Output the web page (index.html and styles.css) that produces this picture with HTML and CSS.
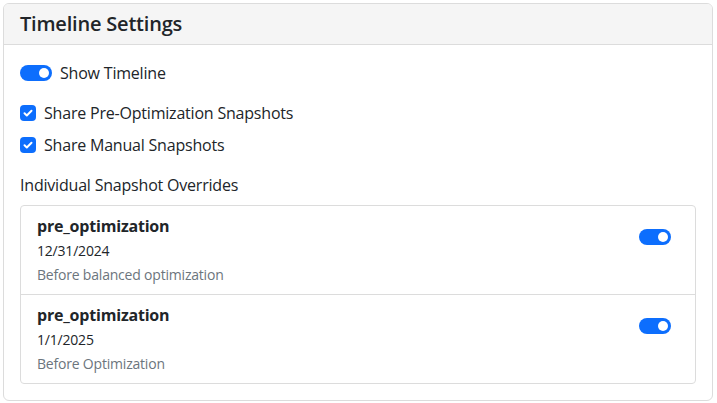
FILE: index.html
```html
<!DOCTYPE html>
<html lang="en">
<head>
  <meta charset="UTF-8">
  <title>Timeline Settings</title>
  <link rel="stylesheet" href="styles.css">
</head>
<body>
  <section class="card">
    <div class="card-header">
      <h5 class="card-title">Timeline Settings</h5>
    </div>

    <div class="card-body">
      <label class="switch-row">
        <span class="switch on"></span>
        <span>Show Timeline</span>
      </label>

      <label class="check-row">
        <span class="check"><svg viewBox="0 0 16 16"><path d="M4.5 8.3l2.3 2.2 4.7-4.8" /></svg></span>
        <span>Share Pre-Optimization Snapshots</span>
      </label>

      <label class="check-row last">
        <span class="check"><svg viewBox="0 0 16 16"><path d="M4.5 8.3l2.3 2.2 4.7-4.8" /></svg></span>
        <span>Share Manual Snapshots</span>
      </label>

      <div class="section-label">Individual Snapshot Overrides</div>

      <div class="list-group">
        <div class="list-item">
          <div class="snap-info">
            <div class="snap-name">pre_optimization</div>
            <div class="snap-date">12/31/2024</div>
            <div class="snap-desc">Before balanced optimization</div>
          </div>
          <span class="switch on"></span>
        </div>

        <div class="list-item">
          <div class="snap-info">
            <div class="snap-name">pre_optimization</div>
            <div class="snap-date">1/1/2025</div>
            <div class="snap-desc">Before Optimization</div>
          </div>
          <span class="switch on"></span>
        </div>
      </div>
    </div>
  </section>
</body>
</html>
```

FILE: styles.css
```css
* {
  padding: 0;
  margin: 0;
  box-sizing: border-box;
}

body {
  padding: 3px 4px 3px 3px;
  background: #fff;
  color: #212529;
  font-family: 'Open Sans', 'Noto Sans', sans-serif;
  font-size: 16px;
  line-height: 24px;
  letter-spacing: -0.2px;
}

.card {
  border: 1px solid #dcdcdc;
  border-radius: 6px;
  overflow: hidden;
}

.card-header {
  height: 41px;
  padding: 8px 16px;
  background: #f5f5f5;
  border-bottom: 1px solid #dcdcdc;
}

.card-title {
  font-size: 20px;
  font-weight: 600;
  line-height: 24px;
}

.card-body {
  padding: 16px;
}

.switch-row,
.check-row {
  display: flex;
  align-items: center;
  gap: 8px;
  height: 24px;
}

.switch-row {
  margin-bottom: 16px;
}

.check-row {
  margin-bottom: 8px;
}

.check-row.last {
  margin-bottom: 16px;
}

.switch {
  display: inline-block;
  position: relative;
  width: 32px;
  height: 16px;
  border-radius: 8px;
  background: #0d6efd;
  flex-shrink: 0;
}

.switch::after {
  content: '';
  position: absolute;
  top: 3px;
  right: 3px;
  width: 10px;
  height: 10px;
  border-radius: 50%;
  background: #fff;
}

.check {
  width: 16px;
  height: 16px;
  border-radius: 4px;
  background: #0d6efd;
  flex-shrink: 0;
  display: flex;
}

.check svg {
  width: 16px;
  height: 16px;
  fill: none;
  stroke: #fff;
  stroke-width: 2;
  stroke-linecap: round;
  stroke-linejoin: round;
}

.section-label {
  margin-bottom: 8px;
}

.list-group {
  border: 1px solid #dcdcdc;
  border-radius: 4px;
}

.list-item {
  display: flex;
  justify-content: space-between;
  align-items: flex-start;
  padding: 8px 24px 9px 16px;
}

.list-item + .list-item {
  border-top: 1px solid #dcdcdc;
}

.list-item .switch {
  margin-top: 15px;
}

.snap-name {
  font-weight: 700;
  margin-bottom: 2px;
}

.snap-date {
  font-size: 14px;
  line-height: 21px;
}

.snap-desc {
  margin-top: 3px;
  font-size: 14px;
  line-height: 21px;
  color: #6c757d;
}
```
